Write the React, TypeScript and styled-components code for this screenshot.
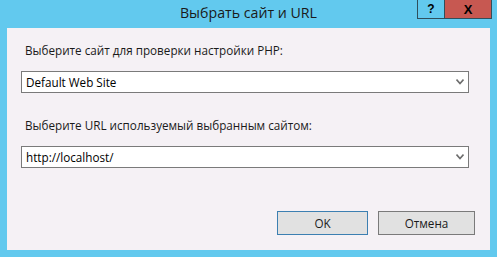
import { createGlobalStyle, styled } from "styled-components";

const GlobalStyle = createGlobalStyle`
  html, body {
    margin: 0;
    padding: 0;
  }
  body {
    font-family: "Open Sans", "Noto Sans", "Liberation Sans", sans-serif;
    font-size: 11.7px;
    color: #000;
  }
`;

const Window = styled.div`
  width: 497px;
  height: 257px;
  background: #62c9ee;
  display: flex;
  flex-direction: column;
  box-sizing: border-box;
`;

const TitleBar = styled.div`
  height: 28px;
  flex-shrink: 0;
  display: grid;
  grid-template-columns: 1fr auto 1fr;
  align-items: start;
`;

const Title = styled.div`
  grid-column: 2;
  font-size: 14.2px;
  line-height: 15px;
  padding-top: 5px;
  color: #1a1a1a;
`;

const Controls = styled.div`
  grid-column: 3;
  justify-self: end;
  display: flex;
  margin-right: 5px;
`;

const CaptionButton = styled.div<{ $close?: boolean }>`
  width: ${(p) => (p.$close ? "47px" : "28px")};
  height: 19px;
  box-sizing: border-box;
  border: 1px solid #2f4f5c;
  border-top: none;
  border-left: ${(p) => (p.$close ? "none" : "1px solid #2f4f5c")};
  background: ${(p) => (p.$close ? "#c75851" : "transparent")};
  display: flex;
  align-items: center;
  justify-content: center;
  font-family: "Liberation Sans", Arial, sans-serif;
  font-weight: bold;
  font-size: ${(p) => (p.$close ? "13px" : "12px")};
  color: #000;
`;

const Panel = styled.div`
  flex: 1;
  margin: 0 7px 7px;
  background: #f5f1f5;
  padding: 14px 21px 15px 14px;
  display: flex;
  flex-direction: column;
`;

const Label = styled.div<{ $top?: number }>`
  line-height: 16px;
  margin-top: ${(p) => p.$top ?? 0}px;
  padding-left: 4px;
  color: #1a1a1a;
`;

const Select = styled.div`
  margin-top: 13px;
  height: 22px;
  box-sizing: border-box;
  border: 1px solid #7a7a7a;
  background: #fff;
  display: flex;
  align-items: center;
  justify-content: space-between;
  padding: 0 4px 0 4px;
`;

const Value = styled.span`
  line-height: 16px;
`;

const Footer = styled.div`
  margin-top: auto;
  margin-right: -6px;
  display: flex;
  justify-content: flex-end;
  gap: 10px;
`;

const Button = styled.div<{ $width: number; $primary?: boolean }>`
  width: ${(p) => p.$width}px;
  height: 24px;
  box-sizing: border-box;
  border: 1px solid ${(p) => (p.$primary ? "#3c7fb1" : "#7a7a7a")};
  background: #e1e1e1;
  display: flex;
  align-items: center;
  justify-content: center;
  color: #1a1a1a;
`;

const Chevron = () => (
  <svg width="8" height="6" viewBox="0 0 8 6">
    <path d="M0.5 0.5 L4 4.5 L7.5 0.5" fill="none" stroke="#6d6d6d" strokeWidth="1.6" />
  </svg>
);

const App = () => {
  return (
    <>
      <GlobalStyle />
      <Window>
        <TitleBar>
          <Title>Выбрать сайт и URL</Title>
          <Controls>
            <CaptionButton>?</CaptionButton>
            <CaptionButton $close>X</CaptionButton>
          </Controls>
        </TitleBar>
        <Panel>
          <Label>Выберите сайт для проверки настройки PHP:</Label>
          <Select>
            <Value>Default Web Site</Value>
            <Chevron />
          </Select>
          <Label $top={24}>Выберите URL используемый выбранным сайтом:</Label>
          <Select>
            <Value>http://localhost/</Value>
            <Chevron />
          </Select>
          <Footer>
            <Button $width={91} $primary>
              OK
            </Button>
            <Button $width={97}>Отмена</Button>
          </Footer>
        </Panel>
      </Window>
    </>
  );
};

export default App;
